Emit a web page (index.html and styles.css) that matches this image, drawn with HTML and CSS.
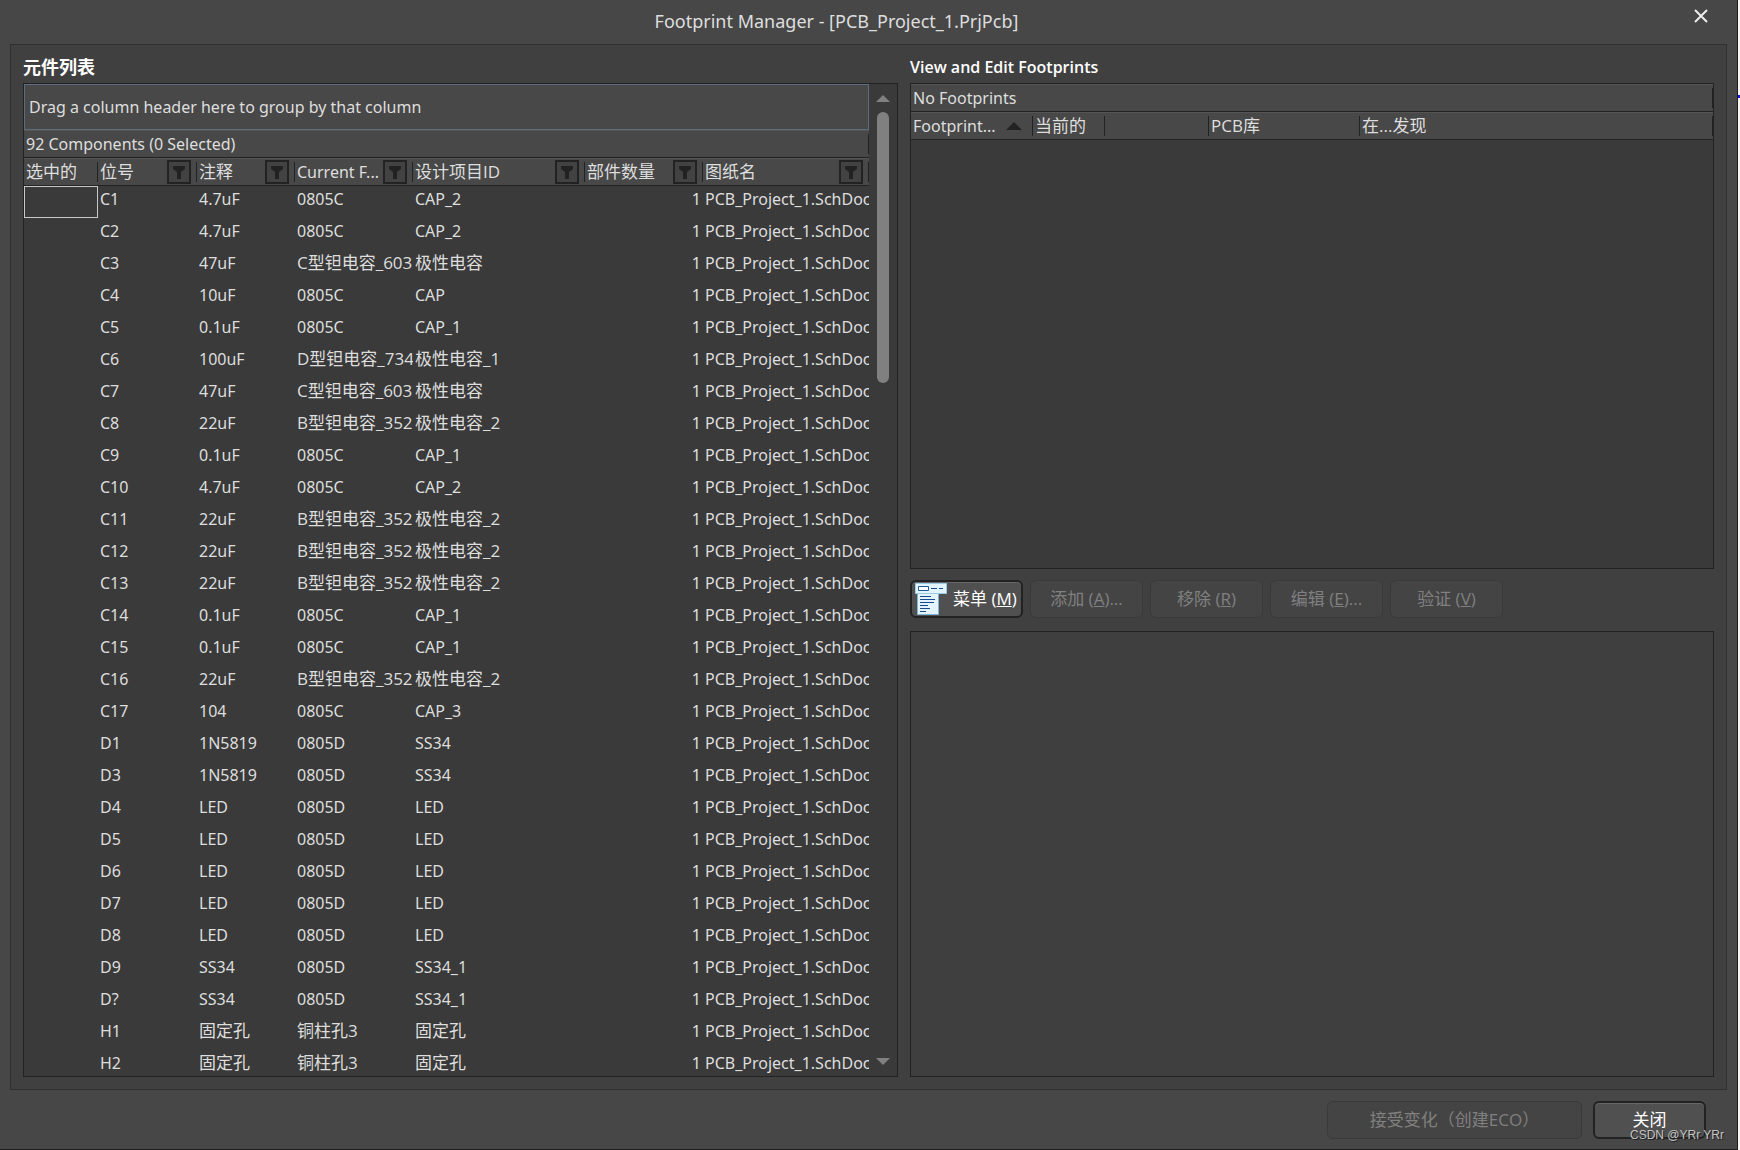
FILE: index.html
```html
<!DOCTYPE html>
<html lang="zh-CN">
<head>
<meta charset="utf-8">
<title>Footprint Manager - [PCB_Project_1.PrjPcb]</title>
<link rel="stylesheet" href="styles.css">
</head>
<body>
<svg class="defs" aria-hidden="true">
  <symbol id="funnel" viewBox="0 0 14 13"><path d="M1 0h12v3L9 6v7H5V6L1 3z" fill="currentColor"/></symbol>
</svg>
<div class="dialog">
  <header class="titlebar">
    <h1>Footprint Manager - [PCB_Project_1.PrjPcb]</h1>
    <button class="close" aria-label="Close"><svg width="14" height="14" viewBox="0 0 14 14"><path d="M1 1l12 12M13 1L1 13" stroke="currentColor" stroke-width="2" fill="none"/></svg></button>
  </header>

  <main class="workspace">
    <section class="components">
      <h2>元件列表</h2>
      <div class="pane list">
        <div class="sheet">
          <div class="groupbox">Drag a column header here to group by that column</div>
          <div class="summary"><span>92 Components (0 Selected)</span></div>
          <div class="rows">
            <table>
              <colgroup><col class="c-sel"><col class="c-des"><col class="c-com"><col class="c-fp"><col class="c-id"><col class="c-num"><col></colgroup>
              <thead>
                <tr>
                  <th><div class="head cjk">选中的</div></th>
                  <th><div class="head cjk"><span>位号</span><button class="filter" aria-label="Filter"><svg><use href="#funnel"/></svg></button></div></th>
                  <th><div class="head cjk"><span>注释</span><button class="filter" aria-label="Filter"><svg><use href="#funnel"/></svg></button></div></th>
                  <th><div class="head"><span>Current F...</span><button class="filter" aria-label="Filter"><svg><use href="#funnel"/></svg></button></div></th>
                  <th><div class="head cjk"><span>设计项目ID</span><button class="filter" aria-label="Filter"><svg><use href="#funnel"/></svg></button></div></th>
                  <th><div class="head cjk"><span>部件数量</span><button class="filter" aria-label="Filter"><svg><use href="#funnel"/></svg></button></div></th>
                  <th><div class="head cjk last"><span>图纸名</span><button class="filter" aria-label="Filter"><svg><use href="#funnel"/></svg></button></div></th>
                </tr>
              </thead>
              <tbody>
                <tr><td class="focus"></td><td>C1</td><td>4.7uF</td><td>0805C</td><td>CAP_2</td><td>1</td><td>PCB_Project_1.SchDoc</td></tr>
                <tr><td></td><td>C2</td><td>4.7uF</td><td>0805C</td><td>CAP_2</td><td>1</td><td>PCB_Project_1.SchDoc</td></tr>
                <tr><td></td><td>C3</td><td>47uF</td><td class="cjk">C型钽电容_6032</td><td class="cjk">极性电容</td><td>1</td><td>PCB_Project_1.SchDoc</td></tr>
                <tr><td></td><td>C4</td><td>10uF</td><td>0805C</td><td>CAP</td><td>1</td><td>PCB_Project_1.SchDoc</td></tr>
                <tr><td></td><td>C5</td><td>0.1uF</td><td>0805C</td><td>CAP_1</td><td>1</td><td>PCB_Project_1.SchDoc</td></tr>
                <tr><td></td><td>C6</td><td>100uF</td><td class="cjk">D型钽电容_734</td><td class="cjk">极性电容_1</td><td>1</td><td>PCB_Project_1.SchDoc</td></tr>
                <tr><td></td><td>C7</td><td>47uF</td><td class="cjk">C型钽电容_6032</td><td class="cjk">极性电容</td><td>1</td><td>PCB_Project_1.SchDoc</td></tr>
                <tr><td></td><td>C8</td><td>22uF</td><td class="cjk">B型钽电容_3528</td><td class="cjk">极性电容_2</td><td>1</td><td>PCB_Project_1.SchDoc</td></tr>
                <tr><td></td><td>C9</td><td>0.1uF</td><td>0805C</td><td>CAP_1</td><td>1</td><td>PCB_Project_1.SchDoc</td></tr>
                <tr><td></td><td>C10</td><td>4.7uF</td><td>0805C</td><td>CAP_2</td><td>1</td><td>PCB_Project_1.SchDoc</td></tr>
                <tr><td></td><td>C11</td><td>22uF</td><td class="cjk">B型钽电容_3528</td><td class="cjk">极性电容_2</td><td>1</td><td>PCB_Project_1.SchDoc</td></tr>
                <tr><td></td><td>C12</td><td>22uF</td><td class="cjk">B型钽电容_3528</td><td class="cjk">极性电容_2</td><td>1</td><td>PCB_Project_1.SchDoc</td></tr>
                <tr><td></td><td>C13</td><td>22uF</td><td class="cjk">B型钽电容_3528</td><td class="cjk">极性电容_2</td><td>1</td><td>PCB_Project_1.SchDoc</td></tr>
                <tr><td></td><td>C14</td><td>0.1uF</td><td>0805C</td><td>CAP_1</td><td>1</td><td>PCB_Project_1.SchDoc</td></tr>
                <tr><td></td><td>C15</td><td>0.1uF</td><td>0805C</td><td>CAP_1</td><td>1</td><td>PCB_Project_1.SchDoc</td></tr>
                <tr><td></td><td>C16</td><td>22uF</td><td class="cjk">B型钽电容_3528</td><td class="cjk">极性电容_2</td><td>1</td><td>PCB_Project_1.SchDoc</td></tr>
                <tr><td></td><td>C17</td><td>104</td><td>0805C</td><td>CAP_3</td><td>1</td><td>PCB_Project_1.SchDoc</td></tr>
                <tr><td></td><td>D1</td><td>1N5819</td><td>0805D</td><td>SS34</td><td>1</td><td>PCB_Project_1.SchDoc</td></tr>
                <tr><td></td><td>D3</td><td>1N5819</td><td>0805D</td><td>SS34</td><td>1</td><td>PCB_Project_1.SchDoc</td></tr>
                <tr><td></td><td>D4</td><td>LED</td><td>0805D</td><td>LED</td><td>1</td><td>PCB_Project_1.SchDoc</td></tr>
                <tr><td></td><td>D5</td><td>LED</td><td>0805D</td><td>LED</td><td>1</td><td>PCB_Project_1.SchDoc</td></tr>
                <tr><td></td><td>D6</td><td>LED</td><td>0805D</td><td>LED</td><td>1</td><td>PCB_Project_1.SchDoc</td></tr>
                <tr><td></td><td>D7</td><td>LED</td><td>0805D</td><td>LED</td><td>1</td><td>PCB_Project_1.SchDoc</td></tr>
                <tr><td></td><td>D8</td><td>LED</td><td>0805D</td><td>LED</td><td>1</td><td>PCB_Project_1.SchDoc</td></tr>
                <tr><td></td><td>D9</td><td>SS34</td><td>0805D</td><td>SS34_1</td><td>1</td><td>PCB_Project_1.SchDoc</td></tr>
                <tr><td></td><td>D?</td><td>SS34</td><td>0805D</td><td>SS34_1</td><td>1</td><td>PCB_Project_1.SchDoc</td></tr>
                <tr><td></td><td>H1</td><td class="cjk">固定孔</td><td class="cjk">铜柱孔3</td><td class="cjk">固定孔</td><td>1</td><td>PCB_Project_1.SchDoc</td></tr>
                <tr><td></td><td>H2</td><td class="cjk">固定孔</td><td class="cjk">铜柱孔3</td><td class="cjk">固定孔</td><td>1</td><td>PCB_Project_1.SchDoc</td></tr>
              </tbody>
            </table>
          </div>
        </div>
        <div class="scrollbar">
          <svg width="14" height="7" viewBox="0 0 14 7"><path d="M0 7l7-7 7 7z" fill="#808080"/></svg>
          <div class="track"><div class="thumb"></div></div>
          <svg width="14" height="7" viewBox="0 0 14 7"><path d="M0 0h14L7 7z" fill="#808080"/></svg>
        </div>
      </div>
    </section>

    <section class="footprints">
      <h2>View and Edit Footprints</h2>
      <div class="pane found">
        <div class="summary"><span>No Footprints</span></div>
        <table>
          <colgroup><col class="f-name"><col class="f-cur"><col class="f-blank"><col class="f-lib"><col></colgroup>
          <thead>
            <tr>
              <th><div class="head"><span>Footprint...</span><svg class="sort" width="16" height="8" viewBox="0 0 16 8"><path d="M0 8l8-8 8 8z" fill="#222"/></svg></div></th>
              <th><div class="head cjk">当前的</div></th>
              <th><div class="head"></div></th>
              <th><div class="head cjk"><span>PCB库</span></div></th>
              <th><div class="head cjk">在...发现</div></th>
            </tr>
          </thead>
        </table>
      </div>
      <div class="actions">
        <button class="btn menu"><svg width="32" height="32" viewBox="0 0 32 32">
          <path d="M2.500 10.500h21v21h-21z" fill="#e2f4fd" stroke="#7db4d8"/>
          <path d="M.5.5h31v10H.5z" fill="#e2f4fd" stroke="#9ccbe6"/>
          <path d="M3.500 3.500h10v4h-10z" fill="#fff" stroke="#1e5aa0"/>
          <path d="M16 5.500h6M24 5.500h4M5 13.500h11M5 16.500h15M5 19.500h14M5 22.500h8M5 25.500h10M5 28.500h6" stroke="#174a8c" fill="none"/>
        </svg><span>菜单 (<u>M</u>)</span></button>
        <button class="btn" disabled>添加 (<u>A</u>)...</button>
        <button class="btn" disabled>移除 (<u>R</u>)</button>
        <button class="btn" disabled>编辑 (<u>E</u>)...</button>
        <button class="btn" disabled>验证 (<u>V</u>)</button>
      </div>
      <div class="pane preview"></div>
    </section>
  </main>

  <footer class="footer">
    <button class="btn accept" disabled>接受变化（创建ECO）</button>
    <button class="btn">关闭</button>
    <span class="credit">CSDN @YRr YRr</span>
  </footer>
</div>
</body>
</html>
```
FILE: styles.css
```css
* {
  box-sizing: border-box;
}

body {
  margin: 0;
  height: 100vh;
  padding-right: 2px;
  background:
    linear-gradient(#1414e6, #1414e6) right 0 top 95px / 2px 3px no-repeat,
    #f8f6f4;
  color: #dedede;
  font: 16px/20px "Noto Sans", "Noto Sans CJK SC", sans-serif;
}

button {
  font: inherit;
  color: inherit;
  padding: 0;
}

.defs {
  display: none;
}

.cjk {
  font-family: "Open Sans", "Noto Sans CJK SC", sans-serif;
  font-size: 17px;
}

.dialog {
  display: flex;
  flex-direction: column;
  height: 100%;
  min-height: 700px;
  background: #474747;
  border: solid #1e1e1e;
  border-width: 0 1px 1px 0;
}

.titlebar {
  display: flex;
  height: 44px;
  padding-right: 28px;
}

.titlebar h1 {
  flex: 1;
  margin: 0;
  padding-right: 20px;
  font-size: 18px;
  font-weight: 400;
  line-height: 42px;
  text-align: center;
}

.close {
  width: 16px;
  height: 32px;
  border: 0;
  background: none;
  color: #ececec;
}

.close svg {
  display: block;
  margin-left: 1px;
}

.workspace {
  flex: 1;
  min-height: 0;
  display: flex;
  gap: 12px;
  margin: 0 10px;
  padding: 0 12px 12px;
  background: #404040;
  border: 1px solid #303030;
}

.components,
.footprints {
  display: flex;
  flex-direction: column;
  min-width: 0;
}

.components {
  flex: 875 1 0;
}

.footprints {
  flex: 804 1 0;
}

h2 {
  flex: none;
  height: 38px;
  margin: 0;
  color: #fff;
  font-family: "Open Sans", "Noto Sans CJK SC", sans-serif;
  font-size: 16px;
  font-weight: 600;
  line-height: 44px;
}

.components h2 {
  font-size: 18px;
}

.pane {
  border: 1px solid #222;
  background: #3a3a3a;
}

.list {
  flex: 1;
  min-height: 0;
  display: flex;
}

.sheet {
  flex: 1;
  min-width: 0;
  display: flex;
  flex-direction: column;
}

.groupbox {
  flex: none;
  height: 46px;
  padding-left: 4px;
  border: 1px solid #5c6d7e;
  background: #484848;
  line-height: 44px;
}

.summary {
  flex: none;
  height: 28px;
  padding: 3px 0 4px 2px;
  background: #484848;
  border-top: 1px solid #555;
  border-bottom: 1px solid #222;
}

.summary span {
  display: block;
  border-right: 1px solid #222;
}

.rows {
  flex: 1;
  min-height: 0;
  overflow: hidden;
}

table {
  width: 100%;
  table-layout: fixed;
  border-collapse: collapse;
}

.c-sel { width: 74px; }
.c-des { width: 99px; }
.c-com { width: 98px; }
.c-fp { width: 118px; }
.c-id { width: 172px; }
.c-num { width: 118px; }
.f-name { width: 122px; }
.f-cur { width: 72px; }
.f-blank { width: 104px; }
.f-lib { width: 151px; }

th {
  height: 28px;
  padding: 0;
  background: #484848;
  box-shadow: inset 0 1px #555, inset 0 -1px #222;
  font-weight: 400;
  text-align: left;
}

.head {
  display: flex;
  align-items: center;
  justify-content: space-between;
  height: 20px;
  padding: 0 5px 0 2px;
  border-right: 1px solid #222;
  white-space: nowrap;
}

.filter {
  flex: none;
  display: flex;
  align-items: center;
  justify-content: center;
  width: 24px;
  height: 24px;
  border: 2px solid #222;
  background: #424242;
  color: #222;
}

.filter svg {
  width: 14px;
  height: 13px;
}

.sort {
  margin-right: 5px;
}

td {
  height: 32px;
  padding: 0 0 6px 2px;
  overflow: hidden;
  line-height: 26px;
  white-space: nowrap;
}

td:nth-child(6) {
  padding-right: 2px;
  text-align: right;
}

.focus {
  outline: 1px solid #c8c8c8;
  outline-offset: -1px;
}

.scrollbar {
  flex: none;
  display: flex;
  flex-direction: column;
  align-items: center;
  gap: 10px;
  width: 28px;
  padding: 11px 0;
}

.track {
  flex: 1;
}

.thumb {
  width: 12px;
  height: 29%;
  border-radius: 6px;
  background: #808080;
}

.found {
  flex: 486 1 0;
}

.actions {
  display: flex;
  gap: 7px;
  padding: 11px 0 13px;
}

.btn {
  width: 113px;
  height: 38px;
  border: 2px solid #222;
  border-radius: 6px;
  background: #505050;
  box-shadow: inset 0 1px #666;
  color: #fff;
  font-family: "Open Sans", "Noto Sans CJK SC", sans-serif;
  font-size: 17px;
}

.btn:disabled {
  border: 1px solid #3a3a3a;
  background: #444;
  box-shadow: none;
  color: #808080;
}

.menu {
  display: flex;
  align-items: center;
  gap: 6px;
  padding-left: 3px;
  white-space: nowrap;
}

.menu svg {
  flex: none;
}

.preview {
  flex: 446 1 0;
  background: #3f3f3f;
}

.footer {
  position: relative;
  display: flex;
  justify-content: flex-end;
  gap: 11px;
  padding: 11px 31px 10px;
}

.accept {
  width: 255px;
}

.credit {
  position: absolute;
  right: 13px;
  bottom: 4px;
  color: #c4c4c4;
  font: 12px/20px "Liberation Sans", sans-serif;
  text-shadow: 1px 1px #222;
}
```
